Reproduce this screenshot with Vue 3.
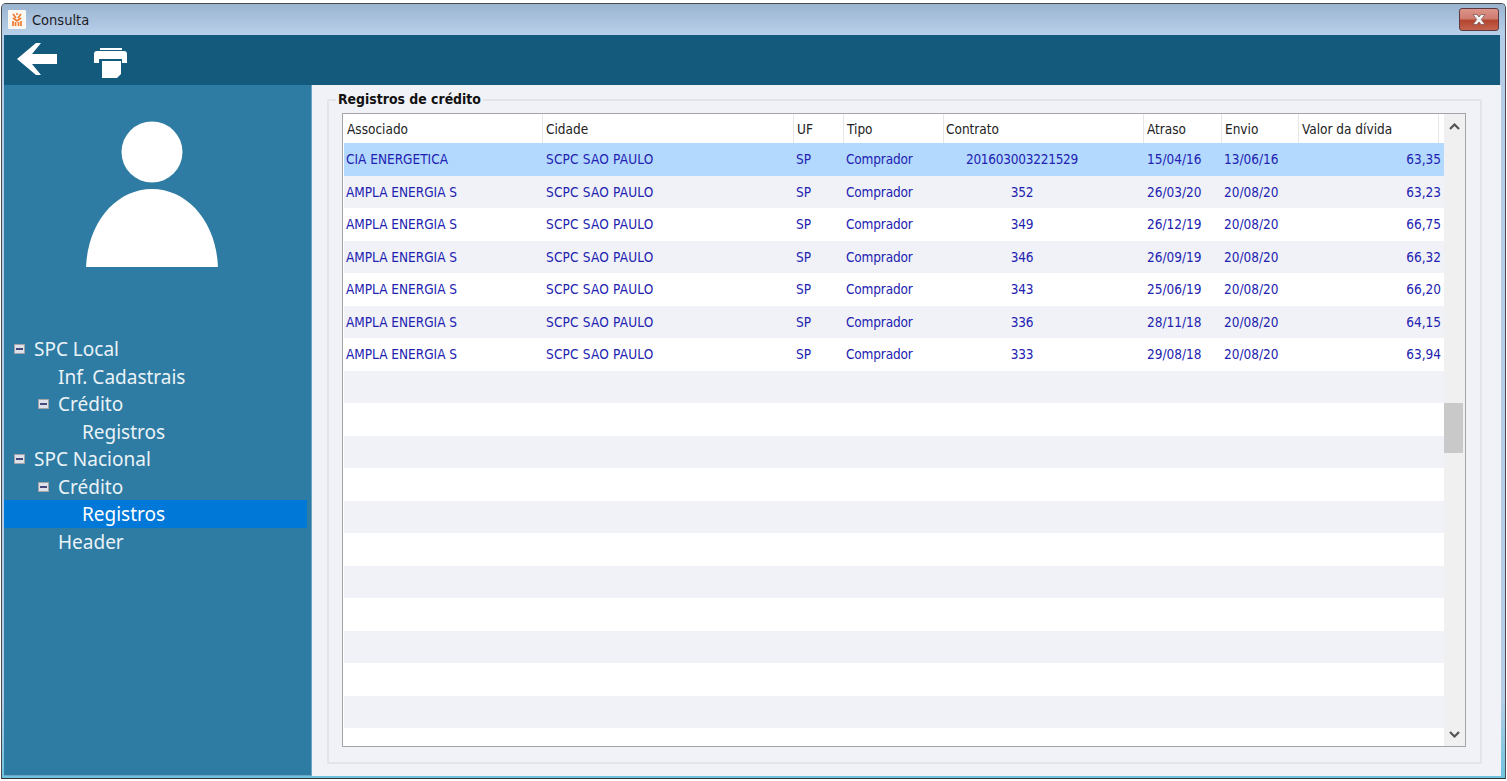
<script setup>
const columns = [
  { label: 'Associado', key: 'assoc', cls: 'c-assoc' },
  { label: 'Cidade', key: 'city', cls: 'c-city' },
  { label: 'UF', key: 'uf', cls: 'c-uf' },
  { label: 'Tipo', key: 'type', cls: 'c-type' },
  { label: 'Contrato', key: 'contract', cls: 'c-contract' },
  { label: 'Atraso', key: 'late', cls: 'c-late' },
  { label: 'Envio', key: 'sent', cls: 'c-sent' },
  { label: 'Valor da dívida', key: 'value', cls: 'c-value' }
]
const base = { assoc: 'AMPLA ENERGIA S', city: 'SCPC SAO PAULO', uf: 'SP', type: 'Comprador', sent: '20/08/20' }
const rows = [
  { ...base, assoc: 'CIA ENERGETICA', contract: '201603003221529', late: '15/04/16', sent: '13/06/16', value: '63,35', selected: true },
  { ...base, contract: '352', late: '26/03/20', value: '63,23' },
  { ...base, contract: '349', late: '26/12/19', value: '66,75' },
  { ...base, contract: '346', late: '26/09/19', value: '66,32' },
  { ...base, contract: '343', late: '25/06/19', value: '66,20' },
  { ...base, contract: '336', late: '28/11/18', value: '64,15' },
  { ...base, contract: '333', late: '29/08/18', value: '63,94' }
]
const emptyRows = Array.from({ length: 12 }, (_, i) => i)
const tree = [
  { label: 'SPC Local', level: 0, toggle: true },
  { label: 'Inf. Cadastrais', level: 1 },
  { label: 'Crédito', level: 1, toggle: true },
  { label: 'Registros', level: 2 },
  { label: 'SPC Nacional', level: 0, toggle: true },
  { label: 'Crédito', level: 1, toggle: true },
  { label: 'Registros', level: 2, active: true },
  { label: 'Header', level: 1 }
]
</script>

<template>
  <div class="page">
    <div class="window">
      <header class="titlebar">
        <svg class="app-icon" viewBox="0 0 18 19" aria-hidden="true">
          <rect width="18" height="19" rx="1" fill="#fbf7f3" />
          <path d="M5 4l3 4M13 4L10 8M8 4h2M5 8l4 3 4-3M5 11v5M7.500 12v4M10.500 12v4M13 11v5" fill="none" stroke="#ee7b30" stroke-width="1.700" />
        </svg>
        <span class="title">Consulta</span>
        <button class="close" aria-label="Fechar">
          <svg viewBox="0 0 14 11" width="14" height="11" aria-hidden="true">
            <path d="M1 .5h4L7 3l2-2.500h4L9.300 5.500 13 10.500H9L7 8l-2 2.500H1l3.700-5z" fill="#f3f3f3" stroke="#74504c" stroke-width=".7" />
          </svg>
        </button>
      </header>

      <div class="toolbar">
        <svg class="tool-back" viewBox="0 0 40 32" aria-hidden="true">
          <path d="M0 16L19 0h5l-9 11h25v10H15l9 11h-5z" fill="#fff" />
        </svg>
        <svg class="tool-print" viewBox="0 0 33 31" aria-hidden="true">
          <path d="M6 1h22v2H6zM3 4h27q3 0 3 3v9h-5v-4H5v4H0V7q0-3 3-3z" fill="#fff" />
          <path d="M8 14h19v13l-4 4H8z" fill="#fff" />
        </svg>
      </div>

      <div class="main">
        <aside class="sidebar">
          <div class="avatar">
            <svg viewBox="0 0 134 148" width="134" height="148" aria-hidden="true">
              <circle cx="67" cy="31" r="30.500" fill="#fff" />
              <path d="M1 146C3 100 32 68 67 68s64 32 66 78z" fill="#fff" />
            </svg>
          </div>
          <ul class="tree">
            <li
              v-for="(node, i) in tree"
              :key="i"
              class="node"
              :class="['lvl-' + node.level, { active: node.active }]"
            >
              <span v-if="node.toggle" class="toggle"><i></i></span>
              <span class="node-label">{{ node.label }}</span>
            </li>
          </ul>
        </aside>

        <section class="content">
          <fieldset class="group">
            <legend>Registros de crédito</legend>
            <div class="grid-frame">
              <div class="grid">
                <div class="head">
                  <div v-for="c in columns" :key="c.key" class="hcell" :class="c.cls">{{ c.label }}</div>
                  <div class="hcell c-fill"></div>
                </div>
                <div class="body">
                  <div
                    v-for="(r, i) in rows"
                    :key="i"
                    class="row"
                    :class="{ selected: r.selected, stripe: i % 2 === 1 }"
                  >
                    <div v-for="c in columns" :key="c.key" class="cell" :class="c.cls">{{ r[c.key] }}</div>
                  </div>
                  <div
                    v-for="i in emptyRows"
                    :key="'e' + i"
                    class="row"
                    :class="{ stripe: i % 2 === 0 }"
                  ></div>
                </div>
              </div>
              <div class="scrollbar">
                <svg class="arrow" viewBox="0 0 11 7" width="11" height="7" aria-hidden="true">
                  <path d="M1 6l4.500-4.500L10 6" fill="none" stroke="#555" stroke-width="2.200" />
                </svg>
                <div class="track"><div class="thumb"></div></div>
                <svg class="arrow" viewBox="0 0 11 7" width="11" height="7" aria-hidden="true">
                  <path d="M1 1l4.500 4.500L10 1" fill="none" stroke="#555" stroke-width="2.200" />
                </svg>
              </div>
            </div>
          </fieldset>
        </section>
      </div>
    </div>
  </div>
</template>

<style scoped>
.page {
  width: 1507px;
  height: 781px;
  box-sizing: border-box;
  padding: 3px 1px 2px 1px;
  background: #fff;
  font-family: "Noto Sans", "Open Sans", sans-serif;
  overflow: hidden;
}
.window {
  height: 100%;
  box-sizing: border-box;
  display: flex;
  flex-direction: column;
  border: 1px solid #4a4a4a;
  border-radius: 5px 5px 0 0;
  border-bottom-color: #333;
  background: linear-gradient(#b4cce6 0, #b4cce6 90%, #6fc3e0 100%);
  overflow: hidden;
}
.titlebar {
  height: 31px;
  flex: none;
  display: flex;
  align-items: center;
  padding: 0 6px 0 6px;
  background: linear-gradient(#9ab4d0, #b9d0ea);
}
.app-icon {
  width: 18px;
  height: 19px;
  flex: none;
  filter: blur(.35px);
}
.title {
  margin-left: 6px;
  font-family: "DejaVu Sans Condensed", "DejaVu Sans", sans-serif;
  font-stretch: condensed;
  font-size: 14.500px;
  color: #1b1b25;
}
.close {
  margin-left: auto;
  width: 40px;
  height: 23px;
  padding: 0;
  display: flex;
  align-items: center;
  justify-content: center;
  border: 1px solid #5b3a44;
  border-radius: 3px;
  background: linear-gradient(#dd9488 0, #cf7d72 45%, #b5452f 55%, #c4634f 100%);
}
.toolbar {
  height: 50px;
  flex: none;
  display: flex;
  align-items: flex-start;
  margin: 0 5px 0 2px;
  padding-top: 8px;
  padding-left: 13px;
  box-sizing: border-box;
  background: #145a7c;
}
.tool-back {
  width: 40px;
  height: 32px;
  flex: none;
}
.tool-print {
  width: 33px;
  height: 31px;
  margin: 4px 0 0 37px;
  flex: none;
}
.main {
  flex: 1;
  min-height: 0;
  display: flex;
  margin: 0 4px 2px 2px;
  background: #f1f2f8;
}
.sidebar {
  width: 308px;
  flex: none;
  box-sizing: border-box;
  background: #2e7ba3;
  border-right: 1px solid #6ba5c4;
  border-bottom: 1px solid #6ba5c4;
  padding-right: 4px;
}
.avatar {
  display: flex;
  justify-content: center;
  padding: 36px 0 0 0;
  margin-right: 8px;
  height: 214px;
  box-sizing: content-box;
}
.avatar svg {
  filter: blur(.7px);
}
.tree {
  list-style: none;
  margin: 0;
  padding: 0;
  color: #eaf3f8;
}
.node {
  height: 27.500px;
  box-sizing: border-box;
  padding-top: 1px;
  display: flex;
  align-items: center;
  font-size: 19px;
  position: relative;
}
.node.active {
  background: #0078d7;
  color: #fff;
}
.lvl-0 { padding-left: 30px; }
.lvl-1 { padding-left: 54px; }
.lvl-2 { padding-left: 78px; }
.toggle {
  position: absolute;
  top: 9px;
  width: 11px;
  height: 10px;
  box-sizing: border-box;
  border: 1px solid #a3a3a8;
  background: #dfe1ea;
  display: flex;
  align-items: center;
  justify-content: center;
}
.toggle i {
  display: block;
  width: 7px;
  height: 2px;
  background: #44487a;
}
.lvl-0 .toggle { left: 10px; }
.lvl-1 .toggle { left: 34px; }
.content {
  flex: 1;
  min-width: 0;
  display: flex;
  padding: 7px 19px 12px 15px;
}
.group {
  flex: 1;
  min-width: 0;
  margin: 0;
  padding: 6px 14px 12px 13px;
  border: 2px solid #e3e4ea;
  border-radius: 2px;
  display: flex;
}
.group legend {
  margin-left: -6px;
  padding: 0 2px 0 2px;
  font-family: "DejaVu Sans Condensed", "DejaVu Sans", sans-serif;
  font-stretch: condensed;
  font-size: 13.900px;
  line-height: 15px;
  font-weight: 700;
  color: #111;
}
.grid-frame {
  flex: 1;
  min-width: 0;
  display: flex;
  height: 634px;
  box-sizing: border-box;
  border: 1px solid #a5a5a8;
  background: #fff;
}
.grid {
  flex: 1;
  min-width: 0;
  display: flex;
  flex-direction: column;
  overflow: hidden;
  padding-left: 1px;
  font-family: "DejaVu Sans Condensed", "DejaVu Sans", sans-serif;
  font-stretch: condensed;
}
.head {
  height: 29px;
  flex: none;
  display: flex;
  background: #fff;
}
.hcell {
  box-sizing: border-box;
  padding: 6px 0 0 3px;
  font-size: 13.500px;
  line-height: 18px;
  color: #222;
  border-right: 1px solid #e6e6e6;
  white-space: nowrap;
}
.hcell.c-contract { padding-left: 2px; }
.c-assoc { width: 199px; }
.c-city { width: 251px; }
.c-uf { width: 50px; }
.c-type { width: 100px; }
.c-contract { width: 200px; }
.c-late { width: 78px; }
.c-sent { width: 77px; }
.c-value { width: 144px; }
.hcell.c-value { width: 140px; }
.c-fill { width: 4px; border-right: 0; }
.body {
  flex: 1;
  min-height: 0;
}
.row {
  height: 32.500px;
  display: flex;
  background: #fff;
}
.row.stripe { background: #f1f2f8; }
.row.selected { background: #b3d9ff; }
.cell {
  box-sizing: border-box;
  padding: 0 0 0 2px;
  font-size: 13.500px;
  line-height: 32.500px;
  color: #2222b0;
  white-space: nowrap;
}
.cell.c-city {
  padding-left: 3px;
  letter-spacing: .2px;
}
.cell.c-late { padding-left: 3px; }
.cell.c-type { letter-spacing: -.15px; }
.cell.c-contract {
  text-align: center;
  padding: 0 44px 0 0;
  letter-spacing: -.25px;
}
.cell.c-value {
  text-align: right;
  padding: 0 2px 0 0;
}
.scrollbar {
  width: 21px;
  flex: none;
  display: flex;
  flex-direction: column;
  align-items: center;
  background: #f0f0f0;
  padding: 9px 0 8px 0;
  box-sizing: border-box;
}
.arrow { flex: none; }
.track {
  flex: 1;
  width: 100%;
  padding-top: 273px;
  box-sizing: border-box;
}
.thumb {
  width: 19px;
  height: 50px;
  background: #c9c9c9;
}
</style>
